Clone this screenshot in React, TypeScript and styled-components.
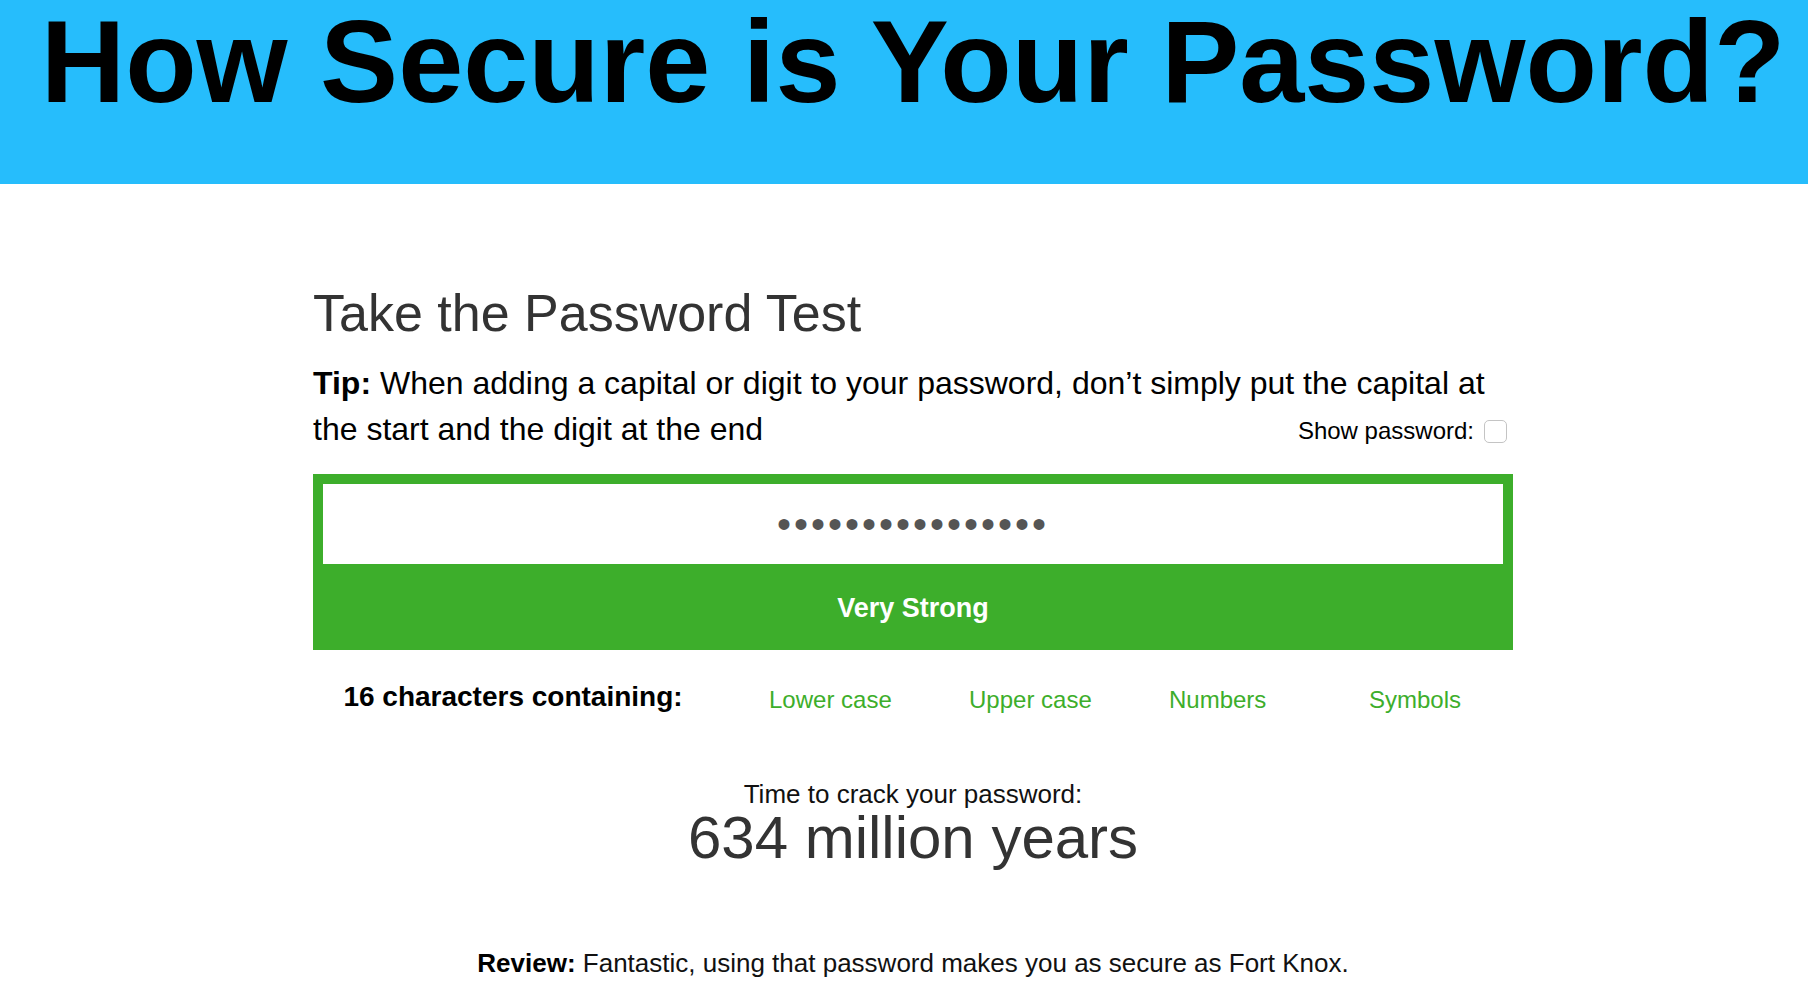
import React, { useState } from 'react';
import styled, { createGlobalStyle } from 'styled-components';

const GlobalStyle = createGlobalStyle`
  html, body {
    margin: 0;
    padding: 0;
    background: #fff;
    font-family: "Liberation Sans", Arial, Helvetica, sans-serif;
    color: #000;
  }
  * { box-sizing: border-box; }
`;

const Page = styled.div`
  width: 100%;
  min-height: 990px;
  padding-left: 18px;
`;

const Banner = styled.header`
  background: #26bdfc;
  height: 184px;
  margin-left: -18px;
  padding: 2px 0 0 18px;
`;

const BannerTitle = styled.h1`
  margin: 0;
  font-size: 117px;
  line-height: 120px;
  font-weight: 900;
  text-align: center;
  color: #000;
`;

const Tester = styled.section`
  width: 1200px;
  margin: 101px auto 0;
`;

const Heading = styled.h2`
  margin: 0;
  font-size: 52px;
  line-height: 56px;
  font-weight: 400;
  color: #333;
`;

const Tip = styled.p`
  margin: 19px 0 0;
  font-size: 32px;
  line-height: 46px;
  color: #000;

  &::after {
    content: '';
    display: block;
    clear: both;
  }
`;

const ShowLabel = styled.label`
  float: right;
  display: flex;
  align-items: center;
  gap: 10px;
  font-size: 24px;
  line-height: 46px;
  margin-right: 6px;
  padding-top: 2px;
`;

const Check = styled.input`
  appearance: none;
  width: 23px;
  height: 23px;
  margin: 0;
  border: 1px solid #c4c4c4;
  border-radius: 5px;
  background: #fff;
`;

const Meter = styled.div<{ $color: string }>`
  margin-top: 20px;
  border: 10px solid ${p => p.$color};
  border-bottom: none;
  background: ${p => p.$color};
`;

const PasswordField = styled.input`
  display: block;
  width: 100%;
  height: 80px;
  border: none;
  outline: none;
  background: #fff;
  text-align: center;
  font-family: "Liberation Sans", Arial, sans-serif;
  font-size: 40px;
  letter-spacing: 3px;
  color: #555;
`;

const Strength = styled.div`
  height: 86px;
  display: flex;
  align-items: center;
  justify-content: center;
  padding-top: 2px;
  color: #fff;
  font-size: 27px;
  font-weight: 700;
`;

const Criteria = styled.div`
  display: grid;
  grid-template-columns: 400px repeat(4, 200px);
  align-items: center;
  margin-top: 24px;
  height: 40px;
`;

const Count = styled.div`
  text-align: center;
  font-size: 28px;
  font-weight: 700;
  line-height: 40px;
`;

const Criterion = styled.div<{ $met: boolean }>`
  padding: 6px 0 0 56px;
  font-size: 24px;
  line-height: 40px;
  color: ${p => (p.$met ? '#3dae2b' : '#aaa')};
`;

const Result = styled.div`
  margin-top: 65px;
  text-align: center;
`;

const CrackLabel = styled.div`
  font-size: 26px;
  line-height: 30px;
  color: #111;
`;

const CrackTime = styled.div`
  font-size: 60px;
  line-height: 58px;
  color: #333;
`;

const Review = styled.p`
  margin: 81px 0 0;
  text-align: center;
  font-size: 26px;
  line-height: 30px;
  color: #111;

  strong { color: #000; }
`;

const criteria = [
  { label: 'Lower case', met: true },
  { label: 'Upper case', met: true },
  { label: 'Numbers', met: true },
  { label: 'Symbols', met: true },
];

const App: React.FC = () => {
  const [password, setPassword] = useState('Xk9#mPq2$vLr7!Tz');
  const [show, setShow] = useState(false);

  return (
    <Page>
      <GlobalStyle />
      <Banner>
        <BannerTitle>How Secure is Your Password?</BannerTitle>
      </Banner>
      <Tester>
        <Heading>Take the Password Test</Heading>
        <Tip>
          <strong>Tip:</strong> When adding a capital or digit to your password, don’t simply put the capital at
          the start and the digit at the end
          <ShowLabel>
            Show password:
            <Check type="checkbox" checked={show} onChange={e => setShow(e.target.checked)} />
          </ShowLabel>
        </Tip>
        <Meter $color="#3dae2b">
          <PasswordField
            type={show ? 'text' : 'password'}
            value={password}
            onChange={e => setPassword(e.target.value)}
          />
          <Strength>Very Strong</Strength>
        </Meter>
        <Criteria>
          <Count>{password.length} characters containing:</Count>
          {criteria.map(c => (
            <Criterion key={c.label} $met={c.met}>{c.label}</Criterion>
          ))}
        </Criteria>
        <Result>
          <CrackLabel>Time to crack your password:</CrackLabel>
          <CrackTime>634 million years</CrackTime>
        </Result>
        <Review>
          <strong>Review:</strong> Fantastic, using that password makes you as secure as Fort Knox.
        </Review>
      </Tester>
    </Page>
  );
};

export default App;
